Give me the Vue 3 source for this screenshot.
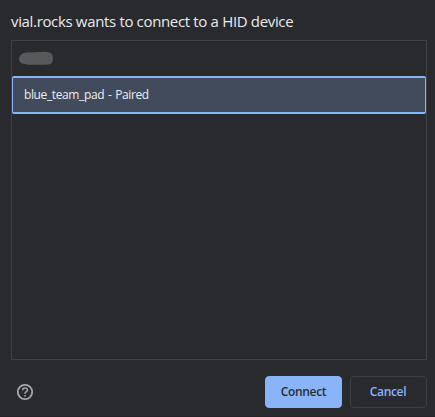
<script setup>
import { ref } from 'vue'

const devices = [
  { name: '', hidden: true },
  { name: 'blue_team_pad - Paired', hidden: false },
]
const selected = ref(1)
</script>

<template>
  <main class="dialog">
    <h1 class="title">vial.rocks wants to connect to a HID device</h1>
    <div class="list">
      <div
        v-for="(device, i) in devices"
        :key="i"
        class="row"
        :class="{ selected: selected === i }"
        @click="selected = i"
      >
        <svg v-if="device.hidden" class="scribble" width="36" height="15" viewBox="0 0 36 15">
          <path d="M6 2C10 1 14 1.6 18 1.3C23 .9 28 .5 31.5 1.5C35.6 2.5 35.8 10 33.5 12.5C30 14.5 22 13.5 16 13.7C11 13.9 6 13.5 3 12C0 10 .3 3.8 6 2Z" fill="#58595b" />
          <path d="M30 5h1M31 9h1" stroke="#48494b" />
        </svg>
        <span v-else class="name">{{ device.name }}</span>
      </div>
    </div>
    <footer class="footer">
      <svg class="help" width="18" height="18" viewBox="0 0 18 18" fill="none">
        <circle cx="9" cy="9" r="7.2" stroke="#a5a9ae" stroke-width="1.8" />
        <path d="M6.6 7.3C6.6 5.8 7.6 5 9 5s2.4.9 2.4 2.1C11.4 8.7 9 8.8 9 10.8" stroke="#a0a4a9" stroke-width="1.6" />
        <path d="M8.2 12h1.6v1.5H8.2z" fill="#a0a4a9" />
      </svg>
      <div class="actions">
        <button class="btn primary"><span>Connect</span></button>
        <button class="btn"><span>Cancel</span></button>
      </div>
    </footer>
  </main>
</template>

<style>
body {
  background: #292a2d;
}
</style>

<style scoped>
.dialog {
  box-sizing: border-box;
  height: 417px;
  padding: 10px 8px 8px 11px;
  display: flex;
  flex-direction: column;
  background: #292a2d;
  border-bottom: 1px solid #282329;
  font-family: "Open Sans", "Noto Sans", sans-serif;
}
.title {
  margin: 0;
  height: 30px;
  font-size: 15px;
  line-height: 23px;
  font-weight: 400;
  letter-spacing: -0.34px;
  color: #e8eaed;
  white-space: nowrap;
}
.list {
  box-sizing: border-box;
  width: 416px;
  height: 320px;
  border: 1px solid #404145;
}
.row {
  box-sizing: border-box;
  height: 35px;
  display: flex;
  align-items: center;
  padding-left: 6px;
}
.row.selected {
  height: 38px;
  padding-left: 11px;
  background: #414b5c;
  border: 2px solid #8ab4f8;
  border-left-width: 1px;
  border-right-width: 1px;
  border-radius: 2px;
}
.name {
  font-size: 12px;
  line-height: 18px;
  font-weight: 450;
  letter-spacing: -0.38px;
  word-spacing: 1px;
  color: #eceef1;
  white-space: nowrap;
}
.footer {
  margin-top: 16px;
  height: 32px;
  display: flex;
  align-items: center;
  justify-content: space-between;
  padding-left: 5px;
}
.actions {
  display: flex;
  gap: 8px;
}
.btn {
  box-sizing: border-box;
  width: 77px;
  height: 32px;
  padding: 0 1px 0 0;
  border: 1px solid #3c4043;
  border-radius: 4px;
  background: transparent;
  color: #8ab4f8;
  font: 600 12px/18px "Open Sans", "Noto Sans", sans-serif;
  letter-spacing: -0.32px;
}
.btn.primary {
  padding: 0;
  background: #8ab4f8;
  border-color: #8ab4f8;
  color: #292c33;
}
</style>
